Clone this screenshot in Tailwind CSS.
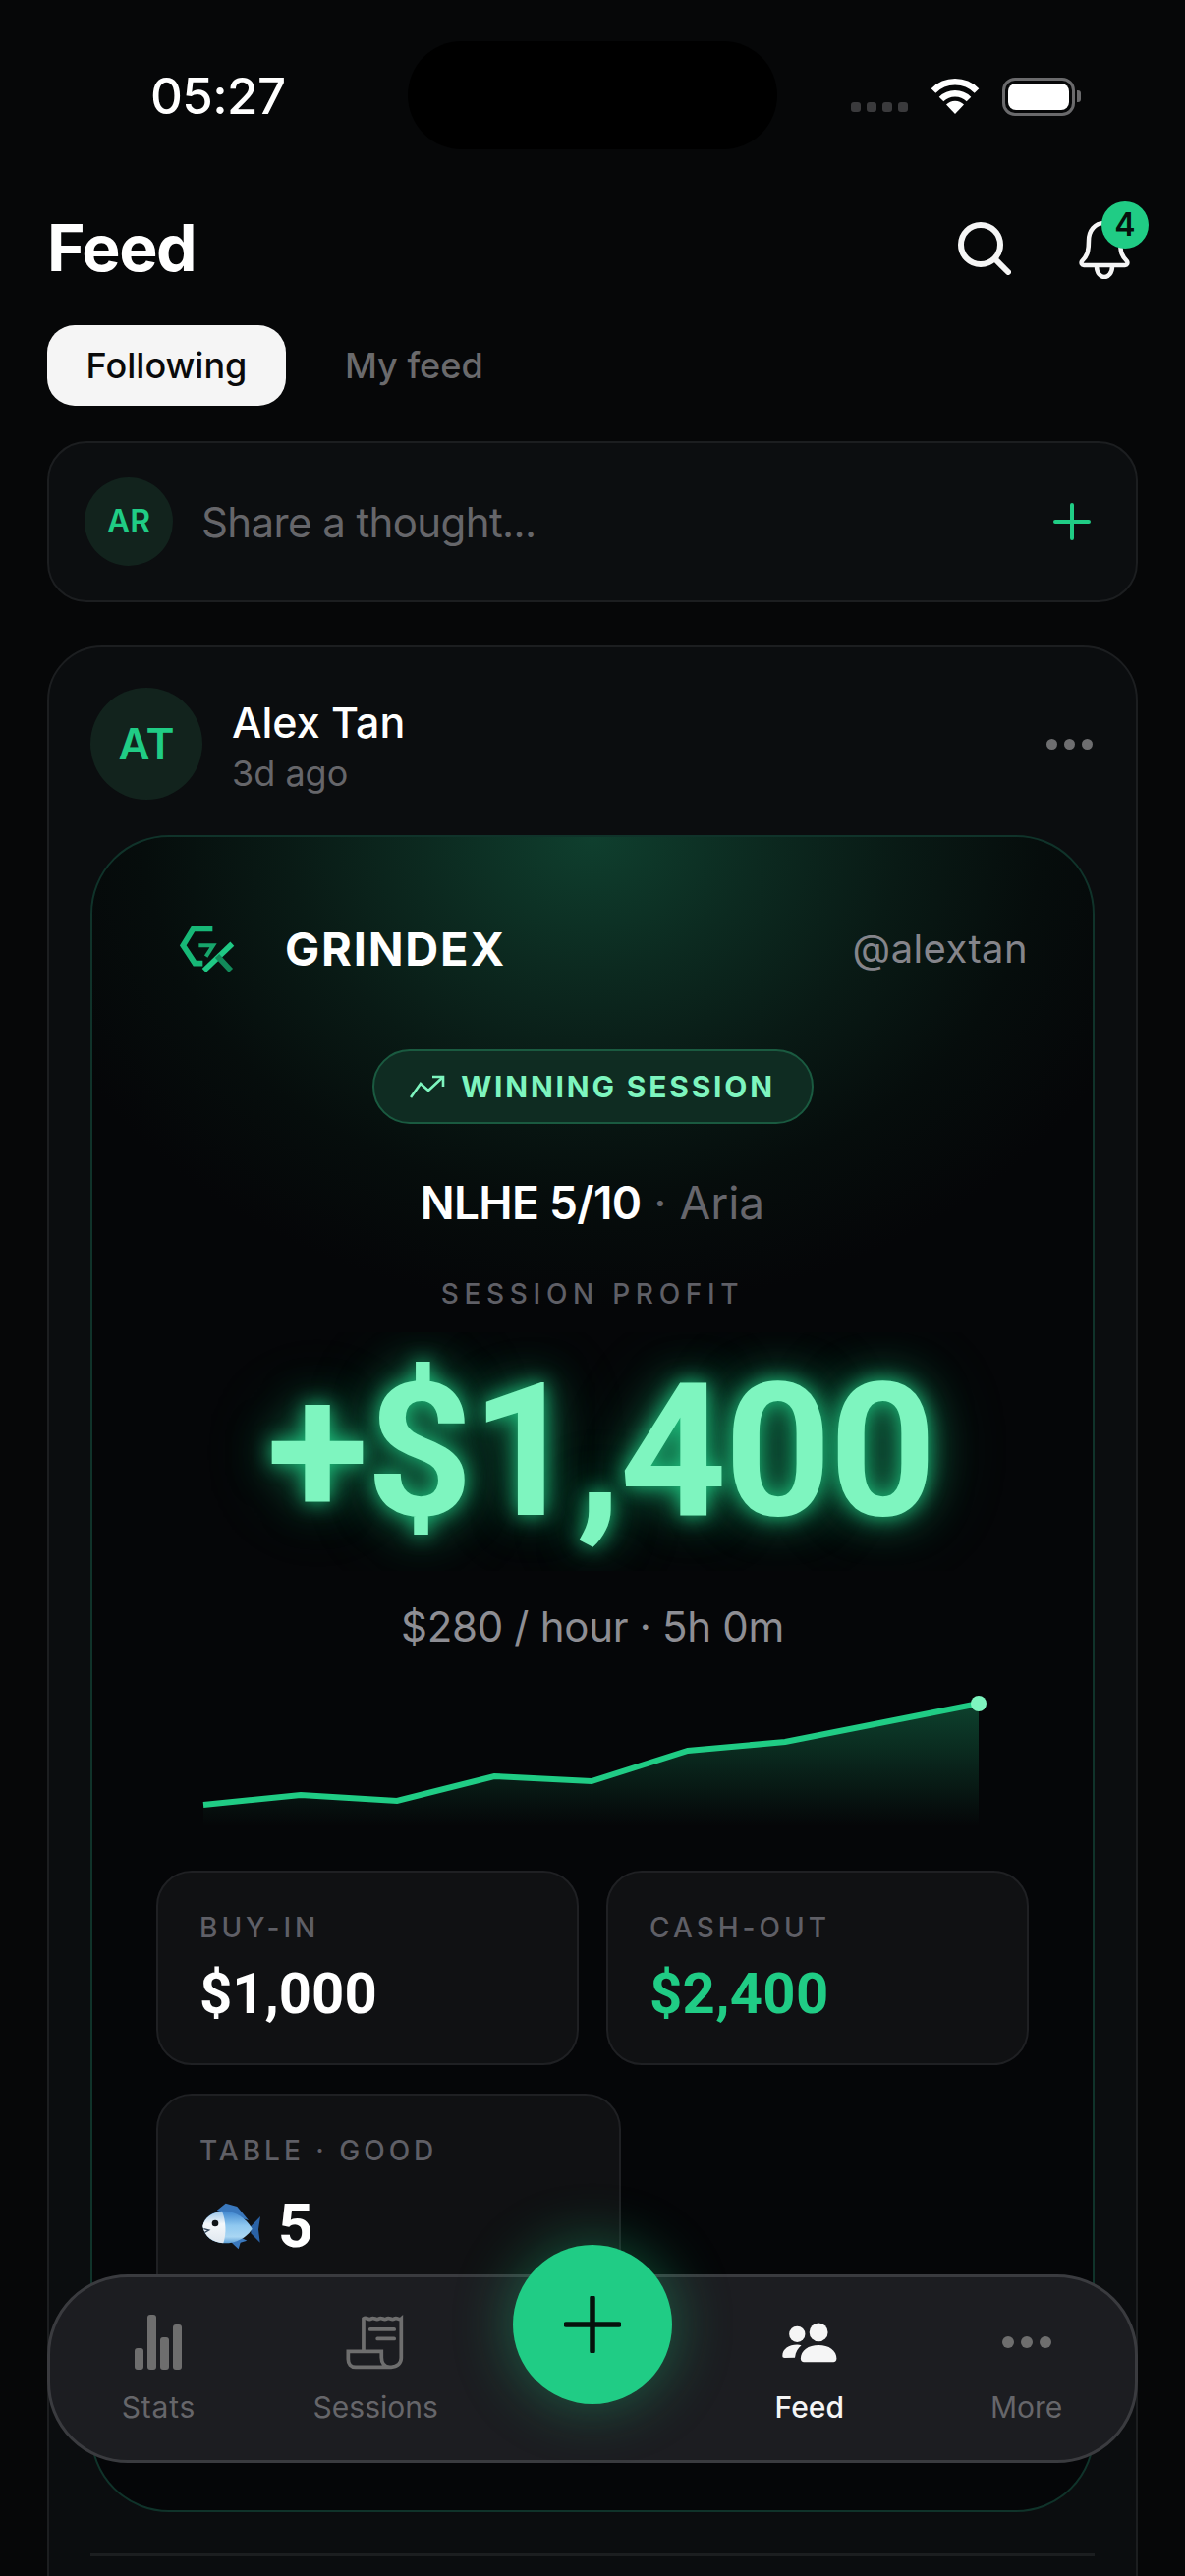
<!DOCTYPE html>
<html lang="en">
<head>
<meta charset="UTF-8" />
<title>Feed</title>
<script src="https://cdn.jsdelivr.net/npm/@tailwindcss/browser@4"></script>
</head>
<body class="bg-[#060708]">
<div class="relative w-[1206px] h-[2622px] overflow-hidden bg-[#060708] text-white font-['Inter',sans-serif]">

  <!-- status bar -->
  <div class="absolute left-[415px] top-[42px] w-[376px] h-[110px] rounded-[55px] bg-black"></div>
  <div class="flex items-center justify-between h-[196px] pl-[153px] pr-[106px]">
    <span class="text-[51px] leading-[60px] font-medium tracking-[-0.6px]">05:27</span>
    <div class="flex items-center gap-[23px]">
      <div class="flex gap-[6px] pt-[22px]">
        <span class="w-[10px] h-[10px] rounded-[3px] bg-[#3a3a3c]"></span>
        <span class="w-[10px] h-[10px] rounded-[3px] bg-[#3a3a3c]"></span>
        <span class="w-[10px] h-[10px] rounded-[3px] bg-[#3a3a3c]"></span>
        <span class="w-[10px] h-[10px] rounded-[3px] bg-[#3a3a3c]"></span>
      </div>
      <svg width="50" height="36" viewBox="0 0 50 36" fill="none" stroke="#fff" stroke-width="6.5">
        <path d="M3 12.5a31 31 0 0 1 44 0" /><path d="M11 21a20 20 0 0 1 28 0" />
        <path d="M25 36l-9-9.5a12.5 12.5 0 0 1 18 0z" fill="#fff" stroke="none" />
      </svg>
      <div class="flex items-center">
        <div class="w-[74px] h-[39px] rounded-[13px] border-[3px] border-[#6a6a6c] p-[3px]"><div class="w-full h-full rounded-[8px] bg-white"></div></div>
        <div class="w-[4px] h-[12px] ml-[2px] rounded-r-[3px] bg-[#6a6a6c]"></div>
      </div>
    </div>
  </div>

  <!-- header -->
  <div class="flex items-center justify-between h-[98px] mt-[7px] pl-[48px] pr-[56px]">
    <h1 class="text-[66px] leading-[80px] font-bold tracking-[-1.5px]">Feed</h1>
    <div class="flex items-center gap-[69px] pt-[2px]">
      <svg width="54" height="54" viewBox="0 0 54 54" fill="none" stroke="#f5f5f5" stroke-width="6" stroke-linecap="round"><circle cx="23" cy="23" r="20" /><path d="M38 38l13 13" /></svg>
      <div class="relative">
        <svg width="52" height="62" viewBox="0 0 52 62" fill="none" stroke="#f5f5f5" stroke-width="4.5" stroke-linejoin="round" class="block"><path d="M26 5c-10 0-16 8-16 18 0 12-2 16-7 21-1 2 0 4 2 4h42c2 0 3-2 2-4-5-5-7-9-7-21 0-10-6-18-16-18z" /><path d="M18 49c0 7 4 11 8 11s8-4 8-11" /></svg>
        <div class="absolute left-[23px] top-[-17px] w-[48px] h-[48px] rounded-full bg-[#20cc85] flex items-center justify-center text-[#06110c] text-[32px] font-semibold">4</div>
      </div>
    </div>
  </div>

  <!-- tabs -->
  <div class="flex items-center mt-[30px] pl-[48px] gap-[60px]">
    <div class="w-[243px] h-[82px] rounded-[28px] bg-[#f5f5f5] flex items-center justify-center text-[#0a0a0a] text-[36px] font-medium">Following</div>
    <div class="text-[36px] font-medium text-[#6a6a6c]">My feed</div>
  </div>

  <!-- composer -->
  <div class="flex items-center mt-[36px] mx-[48px] h-[164px] rounded-[40px] border-[2px] border-[#1c1e20] bg-[#0c0e10] pl-[36px] pr-[46px]">
    <div class="w-[90px] h-[90px] rounded-full bg-[#12231d] flex items-center justify-center text-[#20cc85] text-[32px] font-semibold">AR</div>
    <div class="flex-1 ml-[29px] text-[42px] tracking-[-0.6px] text-[#66666a]">Share a thought...</div>
    <svg width="38" height="38" viewBox="0 0 38 38" stroke="#20cc85" stroke-width="4" stroke-linecap="round"><path d="M19 2v34M2 19h34" /></svg>
  </div>

  <!-- post card -->
  <div class="mt-[44px] mx-[48px] h-[2100px] rounded-[56px] border-[2px] border-[#1c1e20] bg-[#0b0d0f] pt-[41px] px-[42px]">
    <div class="flex items-center">
      <div class="w-[114px] h-[114px] rounded-full bg-[#12231d] flex items-center justify-center text-[#20cc85] text-[44px] font-semibold">AT</div>
      <div class="ml-[30px] flex-1 pt-[4px]">
        <div class="text-[43px] leading-[52px] font-medium text-white">Alex Tan</div>
        <div class="text-[36px] leading-[46px] mt-[3px] text-[#66666a]">3d ago</div>
      </div>
      <div class="flex gap-[7px] pr-[2px]">
        <span class="w-[11px] h-[11px] rounded-full bg-[#6e6e70]"></span>
        <span class="w-[11px] h-[11px] rounded-full bg-[#6e6e70]"></span>
        <span class="w-[11px] h-[11px] rounded-full bg-[#6e6e70]"></span>
      </div>
    </div>

    <!-- session share card -->
    <div class="mt-[36px] h-[1707px] rounded-[80px] border-[2px] border-[#10332a] bg-[#050608] bg-[radial-gradient(ellipse_600px_480px_at_50%_0%,#0f3f2e_0%,#0c2a20_28%,#091a15_52%,#060d0c_76%,#050608_100%)] pt-[89px] pl-[66px] pr-[66px]">
      <div class="flex items-center justify-between pl-[23px] h-[50px]">
        <div class="flex items-center">
          <svg width="56" height="46" viewBox="72 62 168 138" fill="none"><path d="M172 69H113L82 120l36 55h24" stroke="#17b877" stroke-width="17" /><path d="M130 120h44l-22 34" stroke="#17a56b" stroke-width="12" /><path d="M232 115l-86 82" stroke="#1fc884" stroke-width="17" /><path d="M186 152l42 45" stroke="#128a5a" stroke-width="17" /></svg>
          <span class="ml-[51px] text-[47px] font-bold tracking-[1.8px] text-white">GRINDEX</span>
        </div>
        <span class="text-[40px] tracking-[0.4px] text-[#85858b]">@alextan</span>
      </div>

      <div class="flex justify-center mt-[77px]">
        <div class="flex items-center justify-center w-[449px] h-[76px] rounded-[38px] border-[2px] border-[#1a5a40] bg-[#0f2c22]">
          <svg width="36" height="24" viewBox="0 0 36 24" fill="none" stroke="#7ef5bf" stroke-width="2.6"><path d="M1 23l10-14 8 7L34 2" /><path d="M23 2h11v10" /></svg>
          <span class="ml-[16px] text-[30px] font-bold tracking-[2.8px] text-[#7ef5bf]">WINNING SESSION</span>
        </div>
      </div>

      <div class="text-center mt-[52px] text-[46px] leading-[56px] font-semibold tracking-[-0.7px]">NLHE 5/10<span class="font-normal text-[#66666c] tracking-normal"> · Aria</span></div>

      <div class="text-center mt-[47px] text-[28px] leading-[36px] font-medium tracking-[5.7px] text-[#5f5f66]">SESSION PROFIT</div>

      <div class="text-center mt-[21px] h-[243px] overflow-hidden pl-[16px] font-['Roboto',sans-serif] text-[190px] leading-[243px] font-bold tracking-[-2.3px] whitespace-nowrap text-[#7ef5bf] [text-shadow:0_0_20px_rgba(32,204,133,0.9),0_0_44px_rgba(32,204,133,0.55),0_0_80px_rgba(32,204,133,0.3)] -mx-[30px]">+$1,400</div>

      <div class="text-center mt-[31px] text-[42px] leading-[52px] tracking-[-0.3px] text-[#8e8e94]">$280 / hour · 5h 0m</div>

      <svg width="885" height="150" viewBox="0 0 885 150" fill="none" class="block mt-[42px] -ml-[1px]">
        <defs><linearGradient id="area" x1="0" y1="0" x2="0" y2="1"><stop offset="0" stop-color="#20cc85" stop-opacity="0.3" /><stop offset="1" stop-color="#20cc85" stop-opacity="0" /></linearGradient></defs>
        <path d="M48 113L147 103 245 109 344 84 443 89 541 58 640 49 837 10V135H48Z" fill="url(#area)" />
        <path d="M48 113L147 103 245 109 344 84 443 89 541 58 640 49 837 10" stroke="#20cc85" stroke-width="6" />
        <circle cx="837" cy="10" r="8" fill="#7ef5bf" />
      </svg>

      <div class="grid grid-cols-2 gap-x-[28px] gap-y-[29px] mt-[30px] -mx-[1px]">
        <div class="h-[198px] rounded-[36px] border-[2px] border-[#1f2023] bg-[#101113] pl-[42px] pt-[38px]">
          <div class="text-[28px] leading-[36px] font-medium tracking-[4px] text-[#5f5f66]">BUY-IN</div>
          <div class="mt-[14px] font-['Roboto',sans-serif] text-[58px] leading-[70px] font-bold text-white">$1,000</div>
        </div>
        <div class="h-[198px] rounded-[36px] border-[2px] border-[#1f2023] bg-[#101113] pl-[42px] pt-[38px]">
          <div class="text-[28px] leading-[36px] font-medium tracking-[4px] text-[#5f5f66]">CASH-OUT</div>
          <div class="mt-[14px] font-['Roboto',sans-serif] text-[58px] leading-[70px] font-bold tracking-[0.3px] text-[#20cc85]">$2,400</div>
        </div>
        <div class="w-[473px] h-[230px] rounded-[36px] border-[2px] border-[#1f2023] bg-[#101113] pl-[42px] pt-[38px]">
          <div class="text-[28px] leading-[36px] font-medium tracking-[4px] text-[#5f5f66]">TABLE · GOOD</div>
          <div class="flex items-center mt-[29px] h-[60px] ml-[2px]">
            <svg width="61" height="48" viewBox="21 28 183 144">
              <defs>
                <linearGradient id="fishBody" x1="0" y1="0" x2="0" y2="1"><stop offset="0" stop-color="#3f86cf" /><stop offset="0.45" stop-color="#8fc8f0" /><stop offset="0.8" stop-color="#a9d6f3" /><stop offset="1" stop-color="#5d9fd6" /></linearGradient>
                <linearGradient id="fishHead" x1="0" y1="0" x2="0" y2="1"><stop offset="0" stop-color="#9cc6e8" /><stop offset="0.4" stop-color="#f4f8fb" /><stop offset="1" stop-color="#dfe7ee" /></linearGradient>
              </defs>
              <path d="M68 52L95 30l35 10 35 42z" fill="#3a78bd" />
              <path d="M172 100l29-30-6 40 5 40-28-28z" fill="#2a62a6" />
              <path d="M108 145l26 25 6-20 20-6-20-10z" fill="#3a78bd" />
              <path d="M25 100C30 70 58 55 88 54c38-1 70 22 88 54-16 26-48 44-84 44-36 0-62-20-67-52z" fill="url(#fishBody)" />
              <path d="M25 100C30 72 54 58 84 54c12 30 14 66 4 98C56 150 30 130 25 100z" fill="url(#fishHead)" />
              <circle cx="63" cy="91" r="10" fill="#101418" />
              <path d="M28 108l16 4-14 8" fill="none" stroke="#33465a" stroke-width="4" />
            </svg>
            <span class="ml-[17px] text-[62px] leading-[60px] font-['Roboto',sans-serif] font-bold text-white">5</span>
          </div>
        </div>
      </div>
    </div>

    <div class="mt-[42px] h-[3px] bg-[#1c1e20]"></div>
  </div>

  <!-- bottom nav, floats over the feed -->
  <div class="absolute left-[48px] top-[2315px] w-[1110px] h-[192px] rounded-[82px] border-[3px] border-[#3a3b3f] bg-[#1c1d21] grid grid-cols-5 pt-[38px] text-[30px] leading-[36px] text-[#66666a] text-center">
    <div class="flex flex-col items-center">
      <div class="h-[56px] flex items-center">
        <svg width="49" height="56" viewBox="0 0 49 56" fill="#6e6e6e"><rect x="0" y="34" width="9" height="22" rx="3" /><rect x="13" y="0" width="9" height="56" rx="3" /><rect x="26" y="23" width="9" height="33" rx="3" /><rect x="39" y="10" width="9" height="46" rx="3" /></svg>
      </div>
      <span class="mt-[20px] tracking-[0.8px]">Stats</span>
    </div>
    <div class="flex flex-col items-center">
      <div class="h-[56px] flex items-center">
        <svg width="60" height="56" viewBox="100 50 175 165" fill="none" stroke="#6e6e6e" stroke-width="11"><path d="M152 158V62c9-7 14 6 23 0s14 6 23 0 14 6 23 0 14 6 23 0 14 6 21 0v118c0 16-12 27-30 27H128c-14 0-22-9-22-24v-23h100v18c0 16 8 29 25 29" /><path d="M172 94h72M194 122h50" stroke-linecap="round" /></svg>
      </div>
      <span class="mt-[20px]">Sessions</span>
    </div>
    <div></div>
    <div class="flex flex-col items-center">
      <div class="h-[56px] flex items-center">
        <svg width="58" height="44" viewBox="40 68 178 130" fill="#f5f5f5"><circle cx="90" cy="108" r="25" /><circle cx="157" cy="102" r="29" /><path d="M44 176c0-22 20-35 46-35 5 0 9 1 13 2-10 8-18 20-20 38l-32 1c-5 0-7-2-7-6z" /><path d="M101 184c0-26 24-42 56-42s56 16 56 42c0 8-4 11-10 11h-92c-6 0-10-3-10-11z" /></svg>
      </div>
      <span class="mt-[20px] font-medium text-[#f5f5f5]">Feed</span>
    </div>
    <div class="flex flex-col items-center">
      <div class="h-[56px] flex items-center gap-[7px]"><span class="w-[12px] h-[12px] rounded-full bg-[#6e6e6e]"></span><span class="w-[12px] h-[12px] rounded-full bg-[#6e6e6e]"></span><span class="w-[12px] h-[12px] rounded-full bg-[#6e6e6e]"></span></div>
      <span class="mt-[20px]">More</span>
    </div>
  </div>

  <!-- add session button -->
  <div class="absolute left-[522px] top-[2285px] w-[162px] h-[162px] rounded-full bg-[#20cc85] shadow-[0_0_60px_rgba(32,204,133,0.4)] flex items-center justify-center">
    <svg width="58" height="58" viewBox="0 0 58 58" stroke="#06110c" stroke-width="5.5" stroke-linecap="round"><path d="M29 2v54M2 29h54" /></svg>
  </div>
</div>
</body>
</html>
